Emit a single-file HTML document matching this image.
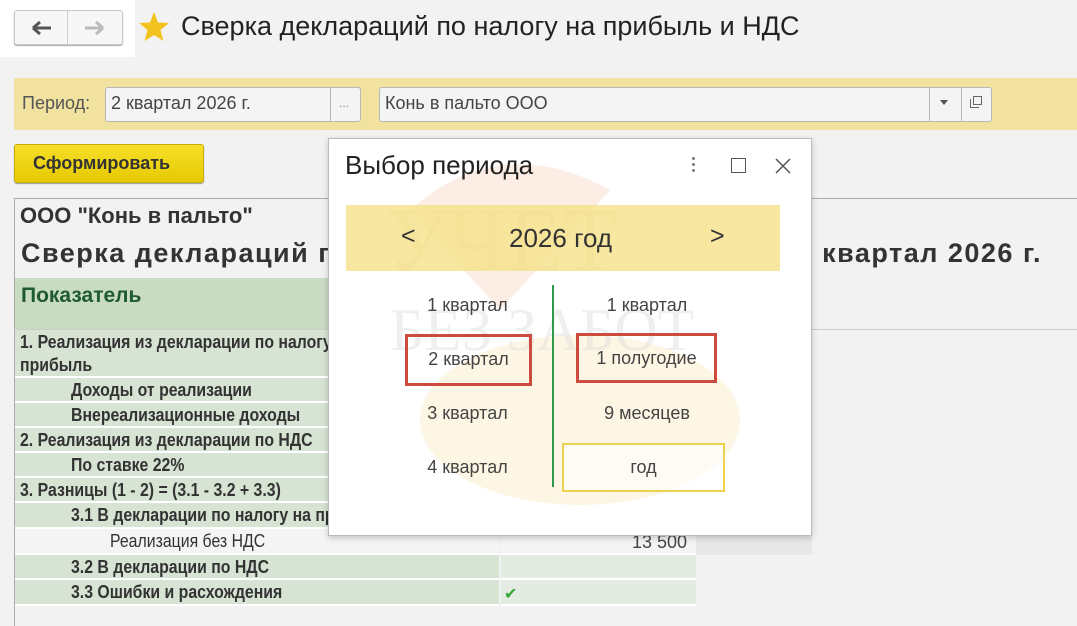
<!DOCTYPE html>
<html><head><meta charset="utf-8"><style>
*{box-sizing:border-box;margin:0;padding:0}
body{width:1077px;height:626px;overflow:hidden;background:#f2f2f2;font-family:"Liberation Sans",Arial,sans-serif;position:relative;color:#333}
.abs{position:absolute}
.row{position:absolute;left:15px;width:484px;background:#d7e3d3;border-bottom:2px solid #fff;font-weight:bold;font-size:18px;color:#333;padding-left:5px;line-height:24px;white-space:nowrap;overflow:hidden}
.row span{display:inline-block;transform:scaleX(.88);transform-origin:left}
.val{position:absolute;left:501px;width:195px;background:#e4ebe2;border-bottom:2px solid #fff}
.q{position:absolute;font-size:18px;color:#444;text-align:center;line-height:26px}
</style></head><body>
<div class="abs" style="left:0;top:0;width:135px;height:57px;background:#fff"></div>
<div class="abs" style="left:14px;top:10px;width:109px;height:35px;border:1px solid #c8c8c8;border-radius:3px;background:#f7f7f7;box-shadow:0 1px 1px #aaa"></div>
<div class="abs" style="left:67px;top:11px;width:1px;height:33px;background:#ccc"></div>
<svg class="abs" style="left:30px;top:18px" width="24" height="20"><path d="M3 10H21M3 10L10 4M3 10L10 16" stroke="#555" stroke-width="3" fill="none"/></svg>
<svg class="abs" style="left:82px;top:18px" width="24" height="20"><path d="M3 10H21M21 10L14 4M21 10L14 16" stroke="#bbb" stroke-width="3" fill="none"/></svg>
<svg class="abs" style="left:138px;top:11px" width="32" height="32"><path d="M16 1L20 11.5L31 12L22.5 19L25.5 30L16 24L6.5 30L9.5 19L1 12L12 11.5Z" fill="#f2c31e"/></svg>
<div class="abs" style="left:181px;top:11px;font-size:27px;color:#222">Сверка деклараций по налогу на прибыль и НДС</div>

<div class="abs" style="left:14px;top:78px;width:1063px;height:52px;background:#f2e29f"></div>
<div class="abs" style="left:22px;top:93px;font-size:18px;color:#555">Период:</div>
<div class="abs" style="left:105px;top:87px;width:256px;height:35px;border:1px solid #b8b8b8;border-radius:3px;background:#f4f4f4"></div>
<div class="abs" style="left:330px;top:87px;width:1px;height:35px;background:#b8b8b8"></div>
<div class="abs" style="left:111px;top:93px;font-size:18px;color:#444">2 квартал 2026 г.</div>
<div class="abs" style="left:339px;top:96px;font-size:12px;color:#888">...</div>
<div class="abs" style="left:379px;top:87px;width:613px;height:35px;border:1px solid #b8b8b8;border-radius:3px;background:#f4f4f4"></div>
<div class="abs" style="left:929px;top:87px;width:1px;height:35px;background:#b8b8b8"></div>
<div class="abs" style="left:961px;top:87px;width:1px;height:35px;background:#b8b8b8"></div>
<div class="abs" style="left:385px;top:93px;font-size:18px;color:#444">Конь в пальто ООО</div>
<div class="abs" style="left:940px;top:100px;width:0;height:0;border-left:4px solid transparent;border-right:4px solid transparent;border-top:5px solid #555"></div>
<div class="abs" style="left:973px;top:96px;width:9px;height:9px;border:1.5px solid #666"></div>
<div class="abs" style="left:970px;top:99px;width:9px;height:9px;border-left:1.5px solid #666;border-bottom:1.5px solid #666"></div>

<div class="abs" style="left:14px;top:144px;width:190px;height:39px;background:linear-gradient(#f7df2a,#e6c900);border:1px solid #c8ad00;border-radius:3px;box-shadow:0 1px 1px #999"></div>
<div class="abs" style="left:33px;top:153px;font-size:18px;font-weight:bold;color:#333">Сформировать</div>

<div class="abs" style="left:14px;top:198px;width:1063px;height:1px;background:#aaa"></div>
<div class="abs" style="left:14px;top:198px;width:1px;height:428px;background:#aaa"></div>
<div class="abs" style="left:14px;top:329px;width:1063px;height:1px;background:#ccc"></div>
<div class="abs" style="left:20px;top:203px;font-size:22px;font-weight:bold;color:#333">ООО "Конь в пальто"</div>
<div class="abs" style="left:21px;top:238px;font-size:27px;font-weight:bold;color:#333;white-space:nowrap;letter-spacing:1.5px">Сверка деклараций по налогу на прибыль и НДС за 2 квартал 2026 г.</div>
<div class="abs" style="left:15px;top:278px;width:484px;height:51px;background:#c9dbc3"></div>
<div class="abs" style="left:21px;top:284px;font-size:21px;font-weight:bold;color:#1e5a32">Показатель</div>

<div class="row" style="top:330px;height:48px;line-height:23px;padding-top:1px"><span>1. Реализация из декларации по налогу на<br>прибыль</span></div>
<div class="row" style="top:378px;height:25px;padding-left:56px"><span>Доходы от реализации</span></div>
<div class="row" style="top:403px;height:25px;padding-left:56px"><span>Внереализационные доходы</span></div>
<div class="row" style="top:428px;height:25px"><span>2. Реализация из декларации по НДС</span></div>
<div class="row" style="top:453px;height:25px;padding-left:56px"><span>По ставке 22%</span></div>
<div class="row" style="top:478px;height:25px"><span>3. Разницы (1 - 2) = (3.1 - 3.2 + 3.3)</span></div>
<div class="row" style="top:503px;height:26px;padding-left:56px"><span>3.1 В декларации по налогу на прибыль</span></div>
<div class="row" style="top:529px;height:26px;padding-left:95px;background:#f4f4f4;font-weight:normal"><span>Реализация без НДС</span></div>
<div class="row" style="top:555px;height:25px;padding-left:56px"><span>3.2 В декларации по НДС</span></div>
<div class="row" style="top:580px;height:26px;padding-left:56px"><span>3.3 Ошибки и расхождения</span></div>
<div class="val" style="top:529px;height:26px;background:#f4f4f4"></div>
<div class="abs" style="left:696px;top:529px;width:116px;height:26px;background:#e8e8e8"></div>
<div class="abs" style="left:632px;top:532px;font-size:18px;color:#444">13 500</div>
<div class="val" style="top:555px;height:25px"></div>
<div class="val" style="top:580px;height:26px"></div>
<div class="abs" style="left:504px;top:584px;font-size:16px;color:#3a3">✔</div>

<div class="abs" style="left:328px;top:138px;width:484px;height:398px;background:#fff;border:1px solid #bbb;box-shadow:0 2px 6px rgba(0,0,0,.2)"></div>
<svg class="abs" style="left:380px;top:150px" width="380" height="380">
<ellipse cx="200" cy="270" rx="160" ry="85" fill="#fcf2d8" opacity=".7"/>
<path d="M30 60 Q120 -20 230 40 L120 160 Z" fill="#f9dccc" opacity=".5"/>
<text x="5" y="120" font-family="Liberation Serif" font-size="90" fill="#d8cc9a" opacity=".5">УЧЕТ</text>
<text x="10" y="200" font-family="Liberation Serif" font-size="60" fill="#ddd" opacity=".45">БЕЗ ЗАБОТ</text>
</svg>
<div class="abs" style="left:345px;top:150px;font-size:26px;color:#222">Выбор периода</div>
<div class="abs" style="left:692px;top:157px;width:3px;height:3px;background:#777;border-radius:50%;box-shadow:0 6px #777,0 12px #777"></div>
<div class="abs" style="left:731px;top:158px;width:15px;height:15px;border:1.5px solid #555"></div>
<svg class="abs" style="left:775px;top:158px" width="16" height="16"><path d="M1 1L15 15M15 1L1 15" stroke="#555" stroke-width="1.5"/></svg>
<div class="abs" style="left:346px;top:205px;width:434px;height:66px;background:#f7e38f;opacity:.85"></div>
<div class="abs" style="left:401px;top:222px;font-size:25px;color:#333">&lt;</div>
<div class="abs" style="left:509px;top:223px;font-size:26px;color:#333">2026 год</div>
<div class="abs" style="left:710px;top:222px;font-size:25px;color:#333">&gt;</div>
<div class="abs" style="left:552px;top:285px;width:2px;height:202px;background:#2e9a4e"></div>
<div class="q" style="left:405px;top:292px;width:125px">1 квартал</div>
<div class="q" style="left:577px;top:292px;width:140px">1 квартал</div>
<div class="abs" style="left:405px;top:334px;width:127px;height:52px;border:3px solid #cc4a3e"></div>
<div class="q" style="left:405px;top:346px;width:127px">2 квартал</div>
<div class="abs" style="left:576px;top:333px;width:141px;height:50px;border:3px solid #cc4a3e"></div>
<div class="q" style="left:576px;top:345px;width:141px">1 полугодие</div>
<div class="q" style="left:405px;top:400px;width:125px">3 квартал</div>
<div class="q" style="left:577px;top:400px;width:140px">9 месяцев</div>
<div class="q" style="left:405px;top:454px;width:125px">4 квартал</div>
<div class="abs" style="left:562px;top:443px;width:163px;height:49px;border:2px solid #ecd24e;background:rgba(255,255,255,.6)"></div>
<div class="q" style="left:562px;top:454px;width:163px">год</div>
</body></html>
